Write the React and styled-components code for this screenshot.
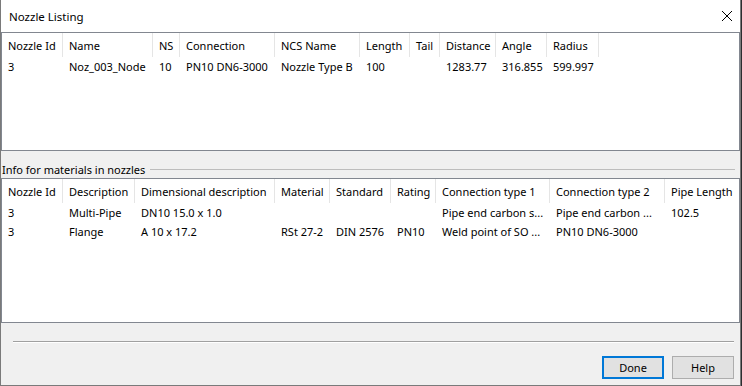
import React from "react";
import styled, { createGlobalStyle } from "styled-components";

const GlobalStyle = createGlobalStyle`
	html, body {
		margin: 0;
		padding: 0;
		background: #2d2d30;
	}
	* {
		box-sizing: border-box;
	}
`;

const FONT = `"Noto Sans", "Liberation Sans", sans-serif`;

/* column definitions for both list views */
const NOZZLE_COLUMNS = [
	{ title: "Nozzle Id", width: 61 },
	{ title: "Name", width: 90 },
	{ title: "NS", width: 27 },
	{ title: "Connection", width: 95 },
	{ title: "NCS Name", width: 85 },
	{ title: "Length", width: 50 },
	{ title: "Tail", width: 30 },
	{ title: "Distance", width: 56 },
	{ title: "Angle", width: 51 },
	{ title: "Radius", width: 52 },
];

const NOZZLE_ROWS = [
	["3", "Noz_003_Node", "10", "PN10 DN6-3000", "Nozzle Type B", "100", "", "1283.77", "316.855", "599.997"],
];

const MATERIAL_COLUMNS = [
	{ title: "Nozzle Id", width: 61 },
	{ title: "Description", width: 72 },
	{ title: "Dimensional description", width: 140 },
	{ title: "Material", width: 55 },
	{ title: "Standard", width: 61 },
	{ title: "Rating", width: 45 },
	{ title: "Connection type 1", width: 114 },
	{ title: "Connection type 2", width: 115 },
	{ title: "Pipe Length", width: 75 },
];

const MATERIAL_ROWS = [
	["3", "Multi-Pipe", "DN10 15.0 x 1.0", "", "", "", "Pipe end carbon s...", "Pipe end carbon ...", "102.5"],
	["3", "Flange", "A 10 x 17.2", "RSt 27-2", "DIN 2576", "PN10", "Weld point of SO ...", "PN10 DN6-3000", ""],
];

const Window = styled.div`
	width: 741px;
	height: 386px;
	display: flex;
	flex-direction: column;
	background: #f0f0f0;
	border: 1px solid #7a7a7a;
	border-top: none;
	font-family: ${FONT};
	font-size: 11px;
	color: #000;
`;

const TitleBar = styled.div`
	height: 32px;
	flex-shrink: 0;
	display: flex;
	align-items: center;
	justify-content: space-between;
	padding: 0 8px 0 8px;
	background: #fff;
`;

const Title = styled.span`
	font-size: 11.5px;
`;

const CloseButton = styled.div`
	width: 10px;
	height: 10px;
	display: flex;
	margin-top: 0;
`;

const ListView = styled.div`
	height: ${(p) => p.height}px;
	flex-shrink: 0;
	background: #fff;
	border: 1px solid #828790;
	overflow: hidden;
`;

const Row = styled.div`
	display: grid;
	grid-template-columns: ${(p) => p.columns};
	height: ${(p) => (p.header ? 24 : 19)}px;
`;

const HeaderCell = styled.div`
	display: flex;
	align-items: center;
	padding: 0 6px;
	border-right: 1px solid #e5e5e5;
	white-space: nowrap;
	overflow: hidden;
`;

const Cell = styled.div`
	display: flex;
	align-items: center;
	padding: 0 6px;
	white-space: nowrap;
	overflow: hidden;
`;

const GroupHeader = styled.div`
	height: 27px;
	flex-shrink: 0;
	display: flex;
	align-items: flex-end;
	padding: 0 5px 0 1px;
`;

const GroupLabel = styled.span`
	line-height: 16px;
	height: 16px;
	padding-right: 5px;
	white-space: nowrap;
`;

const GroupLine = styled.div`
	flex: 1;
	height: 1px;
	margin-bottom: 8px;
	background: #bdbdbd;
`;

const Footer = styled.div`
	flex: 1;
	display: flex;
	flex-direction: column;
	padding: 18px 6px 0 12px;
`;

const Separator = styled.div`
	height: 2px;
	border-top: 1px solid #a0a0a0;
	border-bottom: 1px solid #fff;
`;

const ButtonBar = styled.div`
	display: flex;
	justify-content: flex-end;
	gap: 8px;
	margin-top: 13px;
`;

const Button = styled.button`
	width: 62px;
	height: 23px;
	padding: 0;
	font-family: ${FONT};
	font-size: 11px;
	color: #000;
	background: #e1e1e1;
	border: ${(p) => (p.primary ? "2px solid #0078d7" : "1px solid #adadad")};
	border-radius: 0;
`;

const columnsTemplate = (columns) =>
	columns.map((c, i) => (i === columns.length - 1 && c.fill ? "1fr" : `${c.width}px`)).join(" ");

const List = ({ columns, rows, height }) => {
	const template = columnsTemplate(columns);
	return (
		<ListView height={height}>
			<Row header columns={template}>
				{columns.map((c) => (
					<HeaderCell key={c.title}>{c.title}</HeaderCell>
				))}
			</Row>
			{rows.map((row, r) => (
				<Row key={r} columns={template}>
					{row.map((value, i) => (
						<Cell key={i}>{value}</Cell>
					))}
				</Row>
			))}
		</ListView>
	);
};

export default function App() {
	return (
		<>
			<GlobalStyle />
			<Window>
				<TitleBar>
					<Title>Nozzle Listing</Title>
					<CloseButton>
						<svg width="10" height="10" viewBox="0 0 10 10">
							<path d="M0 0 L10 10 M10 0 L0 10" stroke="#000" strokeWidth="1" />
						</svg>
					</CloseButton>
				</TitleBar>

				<List columns={NOZZLE_COLUMNS} rows={NOZZLE_ROWS} height={119} />

				<GroupHeader>
					<GroupLabel>Info for materials in nozzles</GroupLabel>
					<GroupLine />
				</GroupHeader>

				<List columns={MATERIAL_COLUMNS} rows={MATERIAL_ROWS} height={145} />

				<Footer>
					<Separator />
					<ButtonBar>
						<Button primary>Done</Button>
						<Button>Help</Button>
					</ButtonBar>
				</Footer>
			</Window>
		</>
	);
}
